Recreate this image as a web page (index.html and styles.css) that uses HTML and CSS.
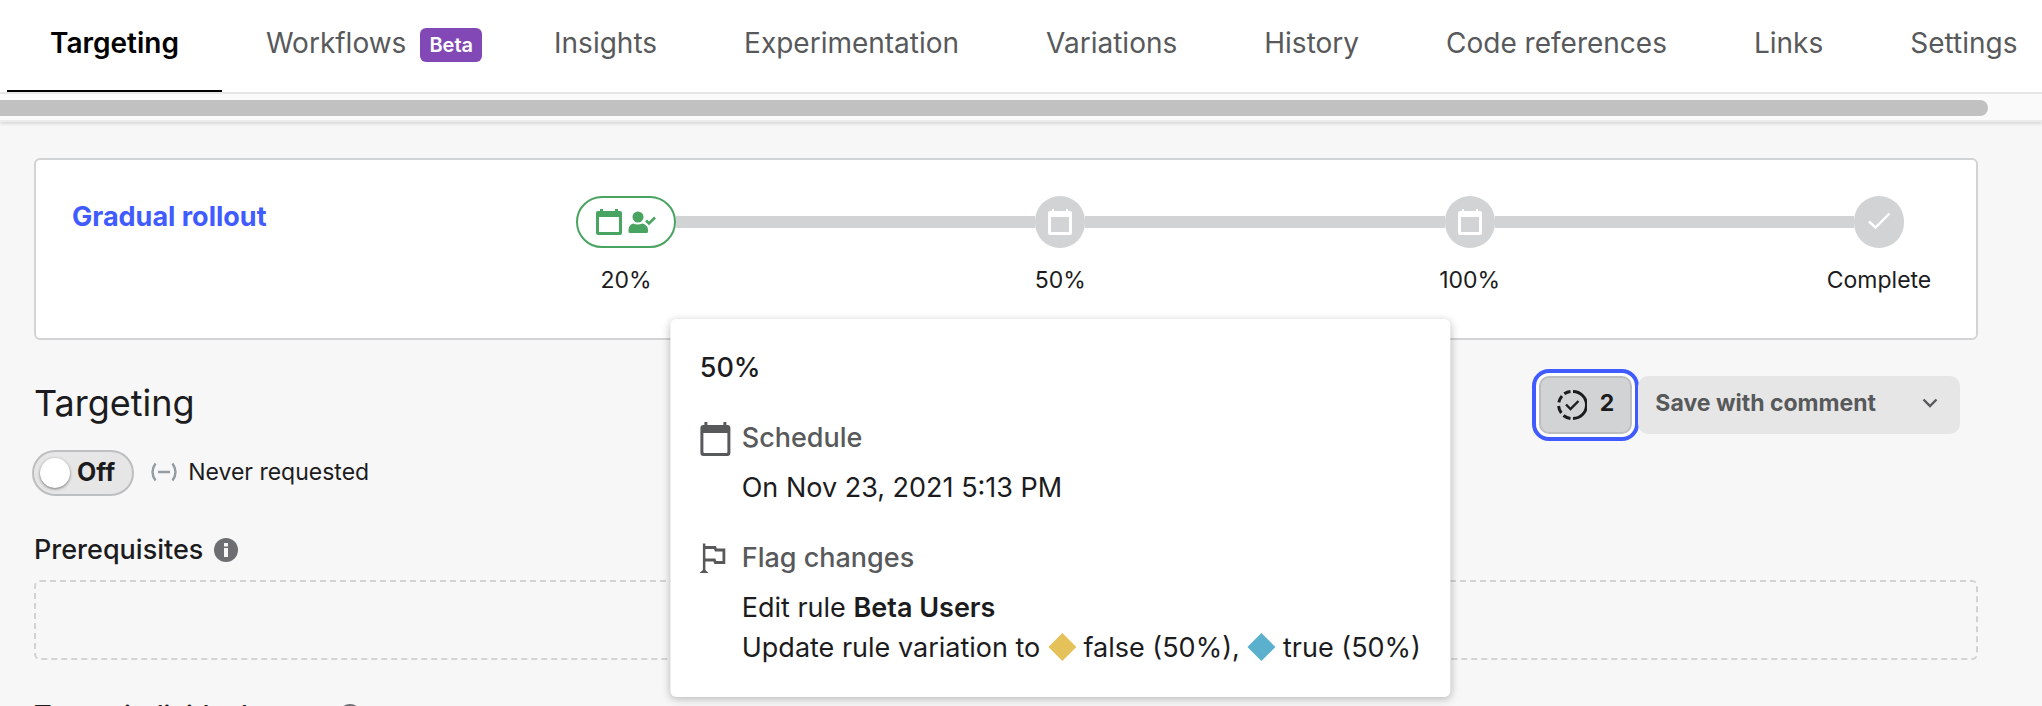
FILE: index.html
```html
<!DOCTYPE html>
<html lang="en">
<head>
<meta charset="utf-8">
<title>Targeting</title>
<link rel="stylesheet" href="styles.css">
</head>
<body>
<svg class="sprite" aria-hidden="true">
  <symbol id="calendar" viewBox="0 0 32 34">
    <path fill="currentColor" fill-rule="evenodd" d="M5 0h3v3h16V0h3v3h1a3 3 0 0 1 3 3v25a3 3 0 0 1-3 3H4a3 3 0 0 1-3-3V6a3 3 0 0 1 3-3h1zM4 11v19a1 1 0 0 0 1 1h22a1 1 0 0 0 1-1V11z"/>
  </symbol>
</svg>
<header class="header">
  <nav class="tabs">
    <a class="tab tab-active" href="#targeting">Targeting</a>
    <a class="tab tab-badged" href="#workflows">Workflows <span class="beta">Beta</span></a>
    <a class="tab" href="#insights">Insights</a>
    <a class="tab" href="#experimentation">Experimentation</a>
    <a class="tab" href="#variations">Variations</a>
    <a class="tab" href="#history">History</a>
    <a class="tab" href="#code">Code references</a>
    <a class="tab" href="#links">Links</a>
    <a class="tab" href="#settings">Settings</a>
  </nav>
  <div class="scroll-track"><div class="scroll-thumb"></div></div>
</header>
<main class="main">
  <section class="card">
    <a class="workflow-name" href="#rollout">Gradual rollout</a>
    <div class="timeline">
      <div class="step step-current">
        <span class="marker marker-current">
          <svg class="icon-step" viewBox="0 0 26 26"><path fill="currentColor" fill-rule="evenodd" d="M4 0h3v2h12V0h3v2h2a2 2 0 0 1 2 2v20a2 2 0 0 1-2 2H2a2 2 0 0 1-2-2V4a2 2 0 0 1 2-2h2zM3 8v15h20V8z"/></svg>
          <svg class="icon-user" viewBox="0 0 28 22"><circle cx="10" cy="6" r="5.5" fill="currentColor"/><path fill="currentColor" d="M5 12.500q4.500 1.800 9.500 0Q20 14 20 19v1.500q0 1.500-1.500 1.500H2Q.5 22 .5 20.500V19Q.5 14 5 12.500z"/><path d="M18 9.500l3 3L27 6.500" fill="none" stroke="currentColor" stroke-width="2.600"/></svg>
        </span>
        <span class="step-label">20%</span>
      </div>
      <div class="connector"></div>
      <div class="step">
        <span class="marker"><svg class="icon-step" viewBox="0 0 26 26"><path fill="currentColor" fill-rule="evenodd" d="M5 0h2v2h12V0h2v2h2a2 2 0 0 1 2 2v20a2 2 0 0 1-2 2H3a2 2 0 0 1-2-2V4a2 2 0 0 1 2-2h2zM4 8v15h18V8z"/></svg></span>
        <span class="step-label">50%</span>
        <div class="tooltip" role="tooltip">
          <h2 class="tooltip-title">50%</h2>
          <div class="tooltip-row">
            <svg class="icon-calendar"><use href="#calendar"/></svg>
            <div>
              <h3 class="tooltip-heading">Schedule</h3>
              <p class="tooltip-text">On Nov 23, 2021 5:13 PM</p>
            </div>
          </div>
          <div class="tooltip-row">
            <svg class="icon-flag" viewBox="0 0 28 30"><path fill="currentColor" d="M3.500.5h2.500v26.500l3 3H0l3.500-3z"/><path d="M5 4.500h10.500l1 2.500h8v12.500h-8.500l-1-2.500H5" fill="none" stroke="currentColor" stroke-width="2.800"/></svg>
            <div>
              <h3 class="tooltip-heading">Flag changes</h3>
              <p class="tooltip-text">Edit rule <strong>Beta Users</strong></p>
              <p class="tooltip-line">Update rule variation to <svg class="diamond diamond-false" viewBox="0 0 28 28"><path d="M14 0l14 14-14 14L0 14z"/></svg> false (50%), <svg class="diamond diamond-true" viewBox="0 0 28 28"><path d="M14 0l14 14-14 14L0 14z"/></svg> true (50%)</p>
            </div>
          </div>
        </div>
      </div>
      <div class="connector"></div>
      <div class="step">
        <span class="marker"><svg class="icon-step" viewBox="0 0 26 26"><path fill="currentColor" fill-rule="evenodd" d="M5 0h2v2h12V0h2v2h2a2 2 0 0 1 2 2v20a2 2 0 0 1-2 2H3a2 2 0 0 1-2-2V4a2 2 0 0 1 2-2h2zM4 8v15h18V8z"/></svg></span>
        <span class="step-label">100%</span>
      </div>
      <div class="connector"></div>
      <div class="step">
        <span class="marker"><svg class="icon-step" viewBox="0 0 26 26"><path d="M3 12.500l6.500 6L23.500 4.500" fill="none" stroke="currentColor" stroke-width="2.400"/></svg></span>
        <span class="step-label">Complete</span>
      </div>
    </div>
  </section>
  <div class="title-row">
    <h1 class="title">Targeting</h1>
    <div class="actions">
      <button class="pending" type="button" aria-label="2 pending changes">
        <svg class="icon-pending" viewBox="0 0 30 30" fill="none" stroke="currentColor" stroke-width="3"><path d="M16 1.500a13.500 13.500 0 0 1 0 27"/><path d="M13.500 1.600a13.500 13.500 0 0 0-6.200 2.200M5 5.900a13.500 13.500 0 0 0-3.200 6.500M1.600 16a13.500 13.500 0 0 0 2.700 7M6.500 25.500a13.500 13.500 0 0 0 7 2.900"/><path d="M9 14.500l4.500 4.500 8-8" stroke-width="2.400"/></svg>
        <span class="pending-count">2</span>
      </button>
      <button class="save" type="button">
        <span>Save with comment</span>
        <svg class="icon-chevron" viewBox="0 0 16 10"><path d="M1.500 1.500L8 8l6.500-6.500" fill="none" stroke="currentColor" stroke-width="2.400"/></svg>
      </button>
    </div>
  </div>
  <div class="status-row">
    <button class="toggle" type="button" role="switch" aria-checked="false"><span class="knob"></span><span class="toggle-label">Off</span></button>
    <span class="status">
      <svg class="icon-status" viewBox="0 0 26 20" fill="none" stroke="currentColor" stroke-width="2.400"><path d="M4.500 1.500Q-1.500 10 4.500 18.500M21.500 1.500Q27.500 10 21.500 18.500M7 10h12"/></svg>
      <span>Never requested</span>
    </span>
  </div>
  <div class="section-heading">
    <h2 class="section-title">Prerequisites</h2>
    <svg class="icon-info" viewBox="0 0 24 24"><circle cx="12" cy="12" r="12" fill="currentColor"/><path d="M10 5h4v3.500h-4zM10 10h4v9h-4z" fill="#f7f7f7"/></svg>
  </div>
  <div class="dropzone"></div>
  <div class="section-heading">
    <h2 class="section-title">Target individual users</h2>
    <svg class="icon-info" viewBox="0 0 24 24"><circle cx="12" cy="12" r="12" fill="currentColor"/><path d="M10 5h4v3.500h-4zM10 10h4v9h-4z" fill="#f7f7f7"/></svg>
  </div>
</main>
</body>
</html>
```
FILE: styles.css
```css
* { box-sizing: border-box; }
html { height: 100%; overflow: hidden; }
body {
  margin: 0;
  height: 100%;
  overflow: hidden;
  background: #f7f7f7;
  color: #1c1c1e;
  font-family: Inter, "Liberation Sans", sans-serif;
  font-size: 23px;
}
h1, h2, h3, p { margin: 0; font-weight: 400; }
svg { flex: none; }
.sprite { position: absolute; width: 0; height: 0; }
button { font-family: inherit; }

.header {
  background: #fff;
  border-bottom: 2px solid #ececec;
  box-shadow: 0 2px 3px rgba(0, 0, 0, 0.12);
}
.tabs {
  display: flex;
  gap: 1px;
  height: 94px;
  padding-left: 7px;
  border-bottom: 2px solid #e6e6e6;
  overflow: hidden;
}
.tab {
  flex: none;
  display: flex;
  align-items: center;
  gap: 14px;
  padding: 0 43px 7px;
  color: #58595b;
  font-size: 28px;
  text-decoration: none;
}
.tab-active {
  color: #000;
  font-weight: 600;
  border-bottom: 2px solid #000;
  padding-bottom: 5px;
}
.tab-badged { padding-right: 28px; }
.beta {
  margin-top: 4px;
  padding: 0 9px;
  border-radius: 6px;
  background: #8249b6;
  color: #fff;
  font-size: 20px;
  font-weight: 600;
  line-height: 34px;
}
.scroll-track { padding: 6px 54px 4px 0; background: #fafafa; }
.scroll-thumb { height: 16px; border-radius: 0 8px 8px 0; background: #c1c1c1; }

.main { padding: 36px 64px 0 34px; }
.card {
  display: flex;
  height: 182px;
  padding: 36px 72px 0 36px;
  border: 2px solid #d1d3d4;
  border-radius: 6px;
  background: #fff;
}
.workflow-name {
  width: 504px;
  padding-top: 4px;
  color: #405bff;
  font-size: 27px;
  font-weight: 700;
  line-height: 34px;
  text-decoration: none;
}
.timeline { display: flex; flex: 1; }
.step {
  position: relative;
  display: flex;
  flex-direction: column;
  align-items: center;
  gap: 16px;
  width: 50px;
}
.step-current { width: 100px; }
.marker {
  display: flex;
  align-items: center;
  justify-content: center;
  gap: 6px;
  width: 100%;
  height: 52px;
  border-radius: 26px;
  background: #d1d3d4;
  color: #fff;
}
.marker-current { border: 2px solid #49a461; background: #fff; color: #49a461; }
.icon-step { width: 26px; height: 26px; }
.icon-user { width: 28px; height: 22px; }
.step-label { line-height: 32px; white-space: nowrap; }
.connector { flex: 1; height: 12px; margin-top: 20px; background: #d1d3d4; }

.tooltip {
  position: absolute;
  z-index: 2;
  top: 123px;
  left: 50%;
  width: max-content;
  padding: 29px;
  transform: translateX(-50%);
  border-radius: 6px;
  background: #fff;
  box-shadow: 0 2px 8px rgba(0, 0, 0, 0.26);
  font-size: 27px;
  line-height: 40px;
}
.tooltip-title { font-size: 27px; font-weight: 500; }
.tooltip-row { display: grid; grid-template-columns: 42px auto; padding-top: 30px; }
.tooltip-heading { color: #58595b; font-size: 27px; font-weight: 500; }
.tooltip-text { padding-top: 10px; }
.tooltip-text strong { font-weight: 600; }
.icon-calendar { width: 32px; height: 34px; margin-top: 4px; color: #58595b; }
.icon-flag { width: 28px; height: 30px; margin-top: 5px; color: #58595b; }
.diamond { width: 28px; height: 28px; vertical-align: -4px; }
.diamond-false { fill: #e5c259; }
.diamond-true { fill: #5bb1cd; }

.title-row { display: flex; justify-content: space-between; padding: 36px 18px 0 0; }
.title { padding-top: 5px; font-size: 36px; line-height: 44px; }
.actions { display: flex; gap: 6px; }
.pending, .save {
  display: flex;
  align-items: center;
  height: 58px;
  border-radius: 10px;
  font-size: 23px;
  font-weight: 700;
}
.pending {
  gap: 13px;
  padding: 0 16px;
  border: 2px solid #bcbec0;
  background: #d1d3d4;
  color: #1c1c1e;
  outline: 4px solid #405bff;
  outline-offset: 3px;
  box-shadow: 0 0 0 4px #fff;
}
.pending-count { padding-bottom: 4px; }
.save {
  gap: 46px;
  padding: 0 22px 4px 17px;
  border: 0;
  background: #e6e6e6;
  color: #58595b;
}
.icon-pending { width: 30px; height: 30px; }
.icon-chevron { width: 16px; height: 10px; }

.status-row {
  display: flex;
  align-items: center;
  gap: 17px;
  margin-left: -2px;
  padding-top: 16px;
}
.toggle {
  display: flex;
  align-items: center;
  gap: 7px;
  height: 46px;
  padding: 0 17px 0 6px;
  border: 2px solid #bcbec0;
  border-radius: 23px;
  background: #e6e6e6;
  color: #1c1c1e;
  font-size: 25px;
  font-weight: 700;
}
.toggle-label { padding-bottom: 3px; }
.knob {
  width: 30px;
  height: 30px;
  border-radius: 50%;
  background: #fff;
  box-shadow: 0 1px 3px rgba(0, 0, 0, 0.5);
}
.status { display: flex; align-items: center; gap: 11px; padding-bottom: 2px; }
.icon-status { width: 26px; height: 20px; color: #939ba3; }
.section-heading { display: flex; align-items: center; gap: 11px; padding: 38px 0 14px; }
.section-title { font-size: 27px; font-weight: 500; line-height: 32px; }
.icon-info { width: 24px; height: 24px; color: #6d6e71; }
.dropzone { height: 80px; margin-bottom: 2px; border: 2px dashed #d1d3d4; border-radius: 6px; }
```
